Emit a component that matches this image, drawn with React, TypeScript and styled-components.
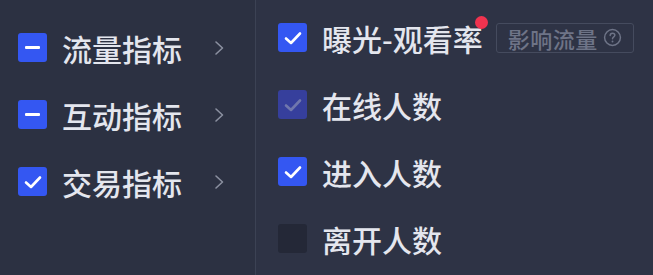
import React from "react";
import styled, { createGlobalStyle } from "styled-components";

const GlobalStyle = createGlobalStyle`
  html, body {
    margin: 0;
    padding: 0;
    background: #2c3142;
  }
  * { box-sizing: border-box; }
`;

type CheckState = "checked" | "partial" | "disabled" | "empty";

const groups: { label: string; state: CheckState }[] = [
  { label: "流量指标", state: "partial" },
  { label: "互动指标", state: "partial" },
  { label: "交易指标", state: "checked" },
];

const metrics: { label: string; state: CheckState; tag?: string; dot?: boolean }[] = [
  { label: "曝光-观看率", state: "checked", tag: "影响流量", dot: true },
  { label: "在线人数", state: "disabled" },
  { label: "进入人数", state: "checked" },
  { label: "离开人数", state: "empty" },
];

const Box: React.FC<{ state: CheckState }> = ({ state }) => (
  <CheckBox $state={state}>
    {state === "partial" && <Dash />}
    {(state === "checked" || state === "disabled") && (
      <svg width="18" height="14" viewBox="0 0 18 14">
        <path
          d="M2 7.5 L7 12 L16 2.5"
          fill="none"
          stroke={state === "disabled" ? "#7077ad" : "#ffffff"}
          strokeWidth="2.6"
          strokeLinecap="round"
          strokeLinejoin="round"
        />
      </svg>
    )}
  </CheckBox>
);

const App: React.FC = () => (
  <>
    <GlobalStyle />
    <Panel>
      <LeftCol>
        {groups.map((g) => (
          <GroupRow key={g.label}>
            <Box state={g.state} />
            <Label>{g.label}</Label>
            <Chevron viewBox="0 0 10 16" width="10" height="16">
              <path d="M2 2 L8.5 8 L2 14" fill="none" stroke="#8b90a0" strokeWidth="1.6" strokeLinecap="round" strokeLinejoin="round" />
            </Chevron>
          </GroupRow>
        ))}
      </LeftCol>
      <Divider />
      <RightCol>
        {metrics.map((m) => (
          <MetricRow key={m.label}>
            <Box state={m.state} />
            <LabelWrap>
              <Label>{m.label}</Label>
              {m.dot && <Dot />}
            </LabelWrap>
            {m.tag && (
              <Tag>
                {m.tag}
                <svg width="19" height="19" viewBox="0 0 18 18">
                  <circle cx="9" cy="9" r="7.5" fill="none" stroke="#6e7487" strokeWidth="1.4" />
                  <path d="M6.8 7.2 C6.8 5.8 7.8 5 9 5 C10.3 5 11.2 5.8 11.2 6.9 C11.2 8.3 9 8.5 9 10.2" fill="none" stroke="#6e7487" strokeWidth="1.4" strokeLinecap="round" />
                  <circle cx="9" cy="12.8" r="0.9" fill="#6e7487" />
                </svg>
              </Tag>
            )}
          </MetricRow>
        ))}
      </RightCol>
    </Panel>
  </>
);

const Panel = styled.div`
  display: flex;
  width: 653px;
  height: 275px;
  background: #2c3142;
  font-family: "Noto Sans CJK SC", "Noto Sans", sans-serif;
  overflow: hidden;
`;

const LeftCol = styled.div`
  display: flex;
  flex-direction: column;
  gap: 38px;
  width: 255px;
  padding: 33px 0 0 18px;
`;

const Divider = styled.div`
  width: 1px;
  background: #3c4254;
`;

const RightCol = styled.div`
  display: flex;
  flex-direction: column;
  gap: 38px;
  flex: 1;
  padding: 23px 0 0 22px;
  background: #2e3345;
`;

const GroupRow = styled.div`
  display: flex;
  align-items: center;
  height: 29px;
`;

const MetricRow = styled.div`
  display: flex;
  align-items: center;
  height: 29px;
`;

const CheckBox = styled.div<{ $state: CheckState }>`
  display: flex;
  align-items: center;
  justify-content: center;
  flex-shrink: 0;
  width: 29px;
  height: 29px;
  border-radius: 3px;
  background: ${(p) =>
    p.$state === "empty" ? "#242837" : p.$state === "disabled" ? "#363f9c" : "#3457f2"};
  margin-right: 15px;
`;

const Dash = styled.div`
  width: 15px;
  height: 3px;
  border-radius: 1px;
  background: #ffffff;
`;

const LabelWrap = styled.div`
  position: relative;
  display: flex;
`;

const Label = styled.span`
  font-size: 30px;
  line-height: 34px;
  font-weight: 500;
  color: #e4e6ee;
  white-space: nowrap;
`;

const Dot = styled.span`
  position: absolute;
  right: -5px;
  top: -5px;
  width: 13px;
  height: 13px;
  border-radius: 50%;
  background: #f0334f;
`;

const Chevron = styled.svg`
  margin-left: 32px;
`;

const Tag = styled.span`
  display: flex;
  align-items: center;
  gap: 5px;
  margin-left: 13px;
  height: 30px;
  padding: 0 11px 0 11px;
  border: 1px solid #454b5e;
  border-radius: 3px;
  color: #6e7487;
  font-size: 22px;
  letter-spacing: 0.5px;
  font-weight: 500;
  white-space: nowrap;
`;

export default App;
